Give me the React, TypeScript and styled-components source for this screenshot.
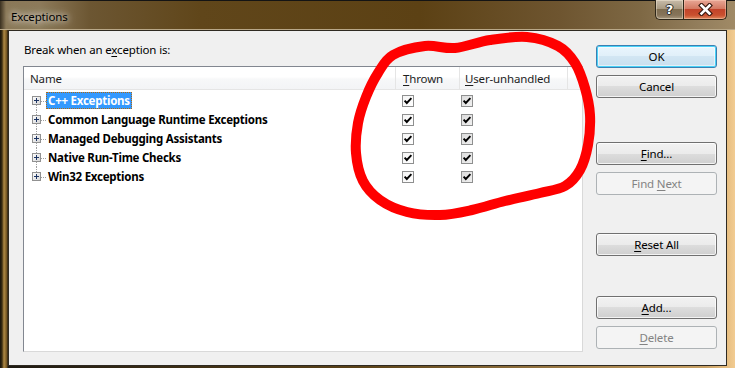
import React from "react";
import styled, { createGlobalStyle, css } from "styled-components";

const Global = createGlobalStyle`
  html, body { margin: 0; padding: 0; background: #1b1710; }
  body {
    font-family: "Segoe UI", "Noto Sans", "Open Sans", sans-serif;
    font-size: 11.5px;
    letter-spacing: -0.15px;
    color: #000;
  }
  * { box-sizing: border-box; }
`;

const Window = styled.div`
  position: relative;
  width: 735px;
  height: 368px;
  overflow: hidden;
  display: flex;
  flex-direction: column;
  background: linear-gradient(
    90deg,
    #16120a 0px,
    #3b2d12 2px,
    #b08a44 4px,
    #6d5020 7px,
    #1e1a12 8px,
    #5c4318 50%,
    #c9a266 96%,
    #e6bd80 98.8%,
    #f2cc92 100%
  );
`;

const TitleBar = styled.div`
  height: 30px;
  display: flex;
  align-items: flex-start;
  border-top: 1px solid #141414;
  background: linear-gradient(
    90deg,
    #3a3020 0px,
    #8a7858 6px,
    #8c7a5a 40px,
    #6c5632 90px,
    #60461a 200px,
    #5c4114 420px,
    #6e5530 560px,
    #7e6844 640px,
    #937e5c 700px,
    #a08a66 100%
  );
  box-shadow: inset 0 -1px 0 #b9a888;
`;

const Title = styled.div`
  padding: 8px 0 0 11px;
  line-height: 16px;
  font-size: 11.5px;
  color: #000;
  text-shadow: 0 0 6px rgba(255, 255, 255, 0.9), 0 0 10px rgba(255, 255, 255, 0.7);
  flex: 1;
`;

const Captions = styled.div`
  display: flex;
  margin-right: 8px;
  margin-top: -1px;
`;

const CaptionButton = styled.div<{ $close?: boolean }>`
  height: 20px;
  width: ${(p) => (p.$close ? 44 : 28)}px;
  display: flex;
  align-items: center;
  justify-content: center;
  border: 1px solid #2e2618;
  border-top: none;
  ${(p) =>
    p.$close
      ? css`
          border-radius: 0 0 5px 0;
          background: linear-gradient(#e8a796 0%, #d47a63 45%, #c2432a 50%, #c9502f 80%, #e08a5e 100%);
          box-shadow: inset 0 0 0 1px rgba(255, 210, 190, 0.45);
        `
      : css`
          border-right: none;
          border-radius: 0 0 0 5px;
          background: linear-gradient(#c8bcaa 0%, #a99a82 45%, #7f6d50 50%, #86745a 80%, #a8987e 100%);
          box-shadow: inset 0 0 0 1px rgba(255, 245, 225, 0.4);
        `}
`;

const HelpGlyph = styled.span`
  color: #fff;
  font-family: "DejaVu Sans", sans-serif;
  font-weight: bold;
  font-size: 13px;
  line-height: 14px;
  text-shadow: 0 0 1px #000, 1px 0 0 #333, -1px 0 0 #333, 0 1px 0 #333, 0 -1px 0 #333;
`;

const Client = styled.div`
  flex: 1;
  margin: 0 8px 2px 8px;
  background: #f0f0f0;
  border: 1px solid #2f2a22;
  display: flex;
  gap: 13px;
  padding: 0 9px 13px 14px;
`;

const LeftColumn = styled.div`
  width: 560px;
  display: flex;
  flex-direction: column;
  padding-top: 11px;
`;

const Caption = styled.div`
  line-height: 16px;
  padding-left: 1px;
  margin-bottom: 8px;
`;

const U = styled.span`
  text-decoration: underline;
  text-underline-offset: 2px;
`;

const ListBox = styled.div`
  flex: 1;
  background: #fff;
  border: 1px solid;
  border-color: #828790 #d9d9d9 #d9d9d9 #828790;
  display: flex;
  flex-direction: column;
`;

const Header = styled.div`
  height: 23px;
  display: flex;
  background: linear-gradient(#ffffff 0%, #ffffff 45%, #f7f8f9 55%, #f3f4f6 100%);
  border-bottom: 1px solid #e5e5e5;
`;

const HeaderCell = styled.div<{ $w: number; $pad: number }>`
  width: ${(p) => p.$w}px;
  padding-left: ${(p) => p.$pad}px;
  border-right: 1px solid #e5e5e5;
  line-height: 23px;
  color: #1e1e1e;
`;

const HeaderFill = styled.div`
  flex: 1;
`;

const Rows = styled.div`
  display: flex;
  flex-direction: column;
  padding-top: 1px;
`;

const Row = styled.div`
  height: 19px;
  display: flex;
  align-items: center;
`;

const NameCell = styled.div<{ $first?: boolean; $last?: boolean }>`
  position: relative;
  width: 372px;
  height: 19px;
  display: flex;
  align-items: center;
  padding-left: 8px;
  &::before {
    content: "";
    position: absolute;
    left: 12px;
    top: ${(p) => (p.$first ? "9px" : "0")};
    bottom: ${(p) => (p.$last ? "10px" : "0")};
    border-left: 1px dotted #a0a0a0;
  }
`;

const Expander = styled.svg`
  position: relative;
  width: 9px;
  height: 9px;
  flex: none;
`;

const Connector = styled.span`
  width: 5px;
  border-top: 1px dotted #a0a0a0;
  margin-top: 1px;
`;

const ItemLabel = styled.span<{ $selected?: boolean }>`
  font-weight: bold;
  letter-spacing: -0.25px;
  height: 17px;
  line-height: 15px;
  padding: 0 1px;
  border: 1px solid transparent;
  white-space: nowrap;
  ${(p) =>
    p.$selected &&
    css`
      background: #3399ff;
      color: #fff;
      border: 1px dotted #b06a10;
    `}
`;

const CheckCell = styled.div<{ $w: number; $pad: number }>`
  width: ${(p) => p.$w}px;
  padding-left: ${(p) => p.$pad}px;
  display: flex;
  align-items: center;
`;

const CheckBox = styled.span<{ $shade?: boolean }>`
  width: 12px;
  height: 12px;
  border: 1px solid #8e8f8f;
  display: flex;
  align-items: center;
  justify-content: center;
  background: ${(p) =>
    p.$shade
      ? "linear-gradient(135deg, #dcdcdc, #f0f0f0)"
      : "linear-gradient(135deg, #f4f4f4, #ffffff)"};
`;

const RightColumn = styled.div`
  width: 121px;
  display: flex;
  flex-direction: column;
  padding-top: 14px;
`;

const Button = styled.div<{ $gap?: number; $default?: boolean; $disabled?: boolean }>`
  height: 23px;
  margin-top: ${(p) => p.$gap ?? 0}px;
  border: 1px solid #707070;
  border-radius: 3px;
  display: flex;
  align-items: center;
  justify-content: center;
  line-height: 16px;
  background: linear-gradient(#f2f2f2 0%, #ebebeb 50%, #dddddd 50%, #cfcfcf 100%);
  box-shadow: inset 0 0 0 1px rgba(255, 255, 255, 0.75);
  ${(p) =>
    p.$default &&
    css`
      border-color: #3c7fb1;
      box-shadow: inset 0 0 0 1px #48d2f8, inset 0 0 0 2px rgba(255, 255, 255, 0.5);
      background: linear-gradient(#eaf6fd 0%, #e0eff9 50%, #d2e6f3 50%, #c8dfee 100%);
    `}
  ${(p) =>
    p.$disabled &&
    css`
      border-color: #adb2b5;
      background: #f4f4f4;
      box-shadow: none;
      color: #838383;
    `}
`;

const Overlay = styled.svg`
  position: absolute;
  left: 0;
  top: 0;
  pointer-events: none;
`;

const PlusBox = () => (
  <Expander viewBox="0 0 9 9">
    <defs>
      <linearGradient id="pb" x1="0" y1="0" x2="1" y2="1">
        <stop offset="0" stopColor="#ffffff" />
        <stop offset="1" stopColor="#d4d4d4" />
      </linearGradient>
    </defs>
    <rect x="0.5" y="0.5" width="8" height="8" fill="url(#pb)" stroke="#919191" />
    <path d="M2 4.5H7M4.5 2V7" stroke="#1d3463" strokeWidth="1" />
  </Expander>
);

const Tick = () => (
  <svg width="10" height="10" viewBox="0 0 10 10">
    <path d="M1.6 4.6 L3.8 7 L8.4 2.2" fill="none" stroke="#000" strokeWidth="1.9" />
  </svg>
);

const CloseGlyph = () => (
  <svg width="15" height="13" viewBox="0 0 15 13">
    <path d="M3.5 2.5 L11.5 10.5 M11.5 2.5 L3.5 10.5" stroke="#3a1a10" strokeWidth="4.8" strokeLinecap="square" />
    <path d="M3.5 2.5 L11.5 10.5 M11.5 2.5 L3.5 10.5" stroke="#fff" strokeWidth="2.6" strokeLinecap="square" />
  </svg>
);

const items = [
  "C++ Exceptions",
  "Common Language Runtime Exceptions",
  "Managed Debugging Assistants",
  "Native Run-Time Checks",
  "Win32 Exceptions",
];

const circlePts: [number, number][] = [
  [393, 55], [425, 46], [455, 48], [490, 40], [527, 37], [558, 46], [575, 63],
  [585, 88], [590, 115], [588, 145], [580, 170], [565, 186], [540, 193],
  [505, 201], [472, 210], [440, 215], [407, 212], [380, 200], [363, 181],
  [356, 153], [358, 123], [366, 97], [378, 73],
];

function smoothClosed(pts: [number, number][]) {
  const n = pts.length;
  let d = `M${pts[0][0]},${pts[0][1]}`;
  for (let i = 0; i < n; i++) {
    const p0 = pts[(i - 1 + n) % n];
    const p1 = pts[i];
    const p2 = pts[(i + 1) % n];
    const p3 = pts[(i + 2) % n];
    const c1x = p1[0] + (p2[0] - p0[0]) / 6;
    const c1y = p1[1] + (p2[1] - p0[1]) / 6;
    const c2x = p2[0] - (p3[0] - p1[0]) / 6;
    const c2y = p2[1] - (p3[1] - p1[1]) / 6;
    d += ` C${c1x.toFixed(1)},${c1y.toFixed(1)} ${c2x.toFixed(1)},${c2y.toFixed(1)} ${p2[0]},${p2[1]}`;
  }
  return d + " Z";
}

export default function App() {
  return (
    <>
      <Global />
      <Window>
        <TitleBar>
          <Title>Exceptions</Title>
          <Captions>
            <CaptionButton>
              <HelpGlyph>?</HelpGlyph>
            </CaptionButton>
            <CaptionButton $close>
              <CloseGlyph />
            </CaptionButton>
          </Captions>
        </TitleBar>
        <Client>
          <LeftColumn>
            <Caption>
              Break when an e<U>x</U>ception is:
            </Caption>
            <ListBox>
              <Header>
                <HeaderCell $w={372} $pad={6}>Name</HeaderCell>
                <HeaderCell $w={64} $pad={7}>
                  <U>T</U>hrown
                </HeaderCell>
                <HeaderCell $w={108} $pad={5}>
                  <U>U</U>ser-unhandled
                </HeaderCell>
                <HeaderFill />
              </Header>
              <Rows>
                {items.map((name, i) => (
                  <Row key={name}>
                    <NameCell $first={i === 0} $last={i === items.length - 1}>
                      <PlusBox />
                      <Connector />
                      <ItemLabel $selected={i === 0}>{name}</ItemLabel>
                    </NameCell>
                    <CheckCell $w={64} $pad={6}>
                      <CheckBox>
                        <Tick />
                      </CheckBox>
                    </CheckCell>
                    <CheckCell $w={108} $pad={1}>
                      <CheckBox $shade>
                        <Tick />
                      </CheckBox>
                    </CheckCell>
                  </Row>
                ))}
              </Rows>
            </ListBox>
          </LeftColumn>
          <RightColumn>
            <Button $default>OK</Button>
            <Button $gap={7}>Cancel</Button>
            <Button $gap={44}>
              <span><U>F</U>ind...</span>
            </Button>
            <Button $gap={7} $disabled>
              <span>Find <U>N</U>ext</span>
            </Button>
            <Button $gap={38}>
              <span><U>R</U>eset All</span>
            </Button>
            <Button $gap={40}>
              <span><U>A</U>dd...</span>
            </Button>
            <Button $gap={7} $disabled>
              <span><U>D</U>elete</span>
            </Button>
          </RightColumn>
        </Client>
        <Overlay width="735" height="368" viewBox="0 0 735 368">
          <path d={smoothClosed(circlePts)} fill="none" stroke="#ff0000" strokeWidth="10" strokeLinejoin="round" />
        </Overlay>
      </Window>
    </>
  );
}
